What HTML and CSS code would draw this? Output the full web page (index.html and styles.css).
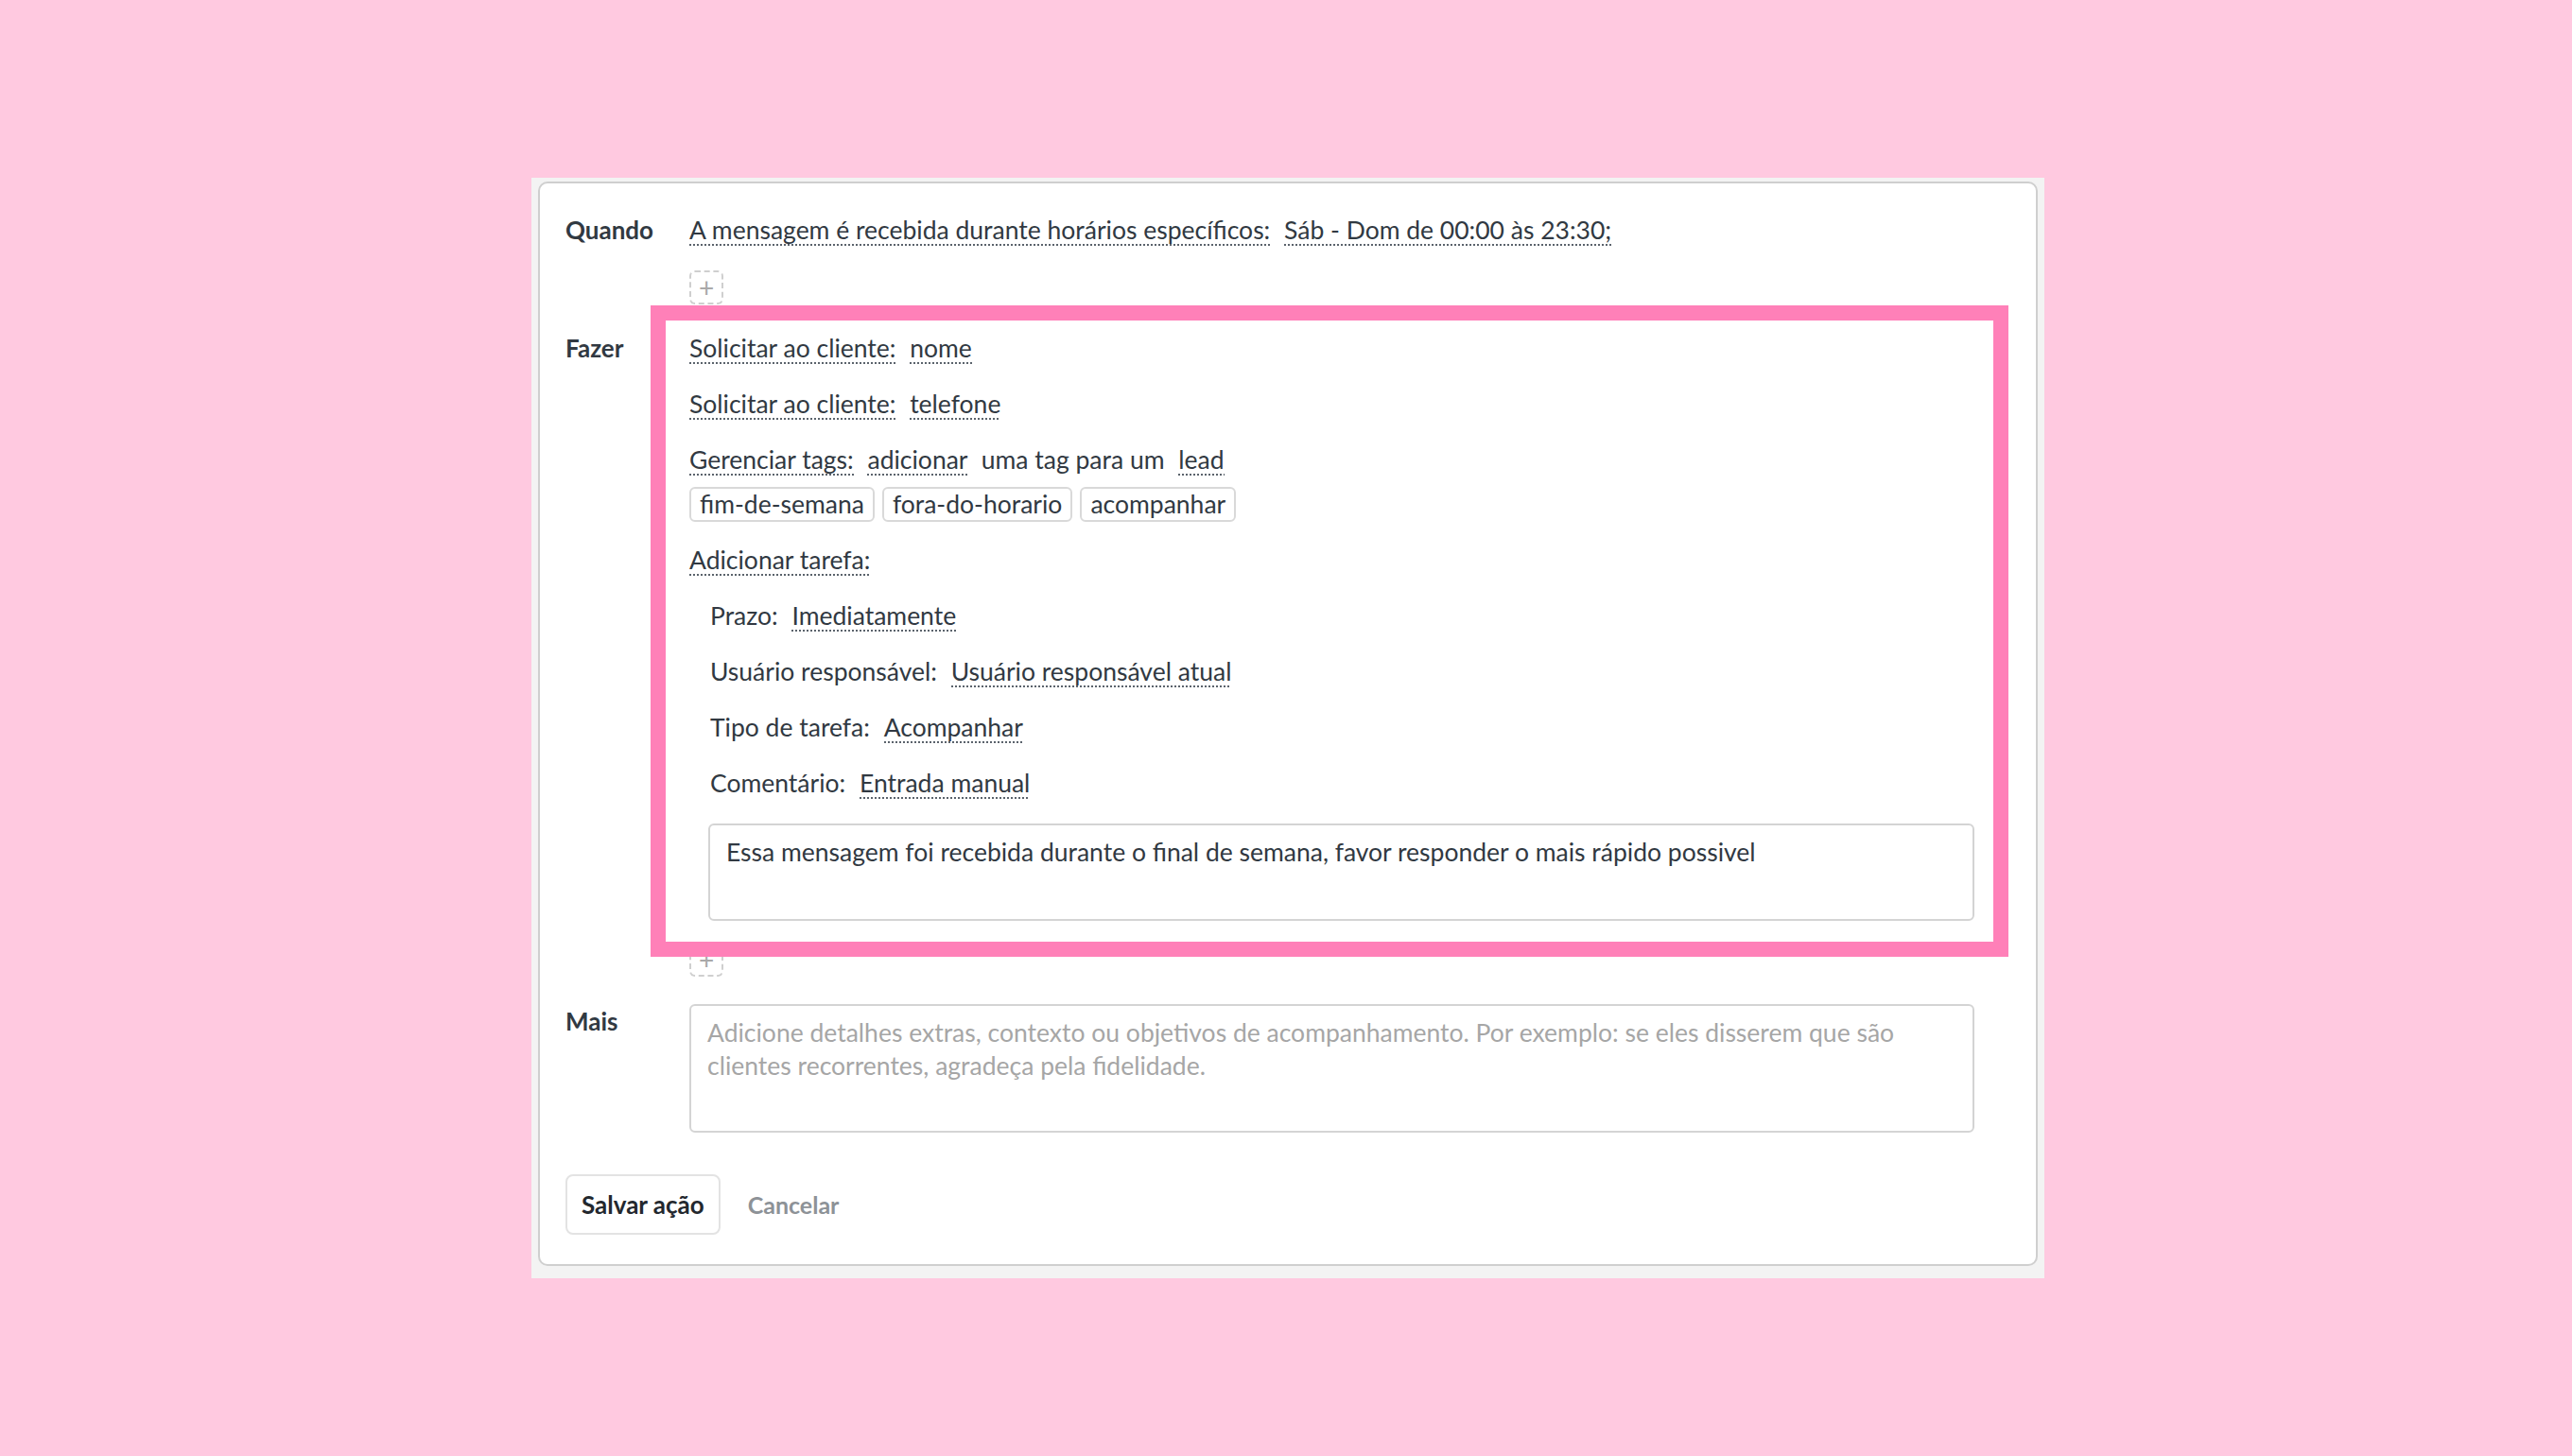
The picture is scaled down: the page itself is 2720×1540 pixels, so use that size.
FILE: index.html
```html
<!DOCTYPE html>
<html lang="pt-BR">
<head>
    <meta charset="UTF-8">
    <meta name="viewport" content="width=device-width, initial-scale=1.0">
    <title>Editar ação</title>
    <link rel="stylesheet" href="styles.css">
</head>
<body>
    <div class="frame">
        <div class="card">
            <div class="row row-when">
                <div class="label">Quando</div>
                <div class="content">
                    <div class="line">
                        <span class="link">A mensagem é recebida durante horários específicos:</span>
                        <span class="link">Sáb - Dom de 00:00 às 23:30;</span>
                    </div>
                    <button class="add">+</button>
                </div>
            </div>

            <div class="row row-do">
                <div class="label">Fazer</div>
                <div class="content">
                    <div class="actions">
                        <div class="line">
                            <span class="link">Solicitar ao cliente:</span>
                            <span class="link">nome</span>
                        </div>
                        <div class="line">
                            <span class="link">Solicitar ao cliente:</span>
                            <span class="link">telefone</span>
                        </div>
                        <div class="line line-tags">
                            <span class="link">Gerenciar tags:</span>
                            <span class="link">adicionar</span>
                            <span class="plain">uma tag para um</span>
                            <span class="link">lead</span>
                        </div>
                        <div class="tags">
                            <span class="tag">fim-de-semana</span>
                            <span class="tag">fora-do-horario</span>
                            <span class="tag">acompanhar</span>
                        </div>
                        <div class="line">
                            <span class="link">Adicionar tarefa:</span>
                        </div>
                        <div class="task">
                            <div class="line">
                                <span class="plain">Prazo:</span>
                                <span class="link">Imediatamente</span>
                            </div>
                            <div class="line">
                                <span class="plain">Usuário responsável:</span>
                                <span class="link">Usuário responsável atual</span>
                            </div>
                            <div class="line">
                                <span class="plain">Tipo de tarefa:</span>
                                <span class="link">Acompanhar</span>
                            </div>
                            <div class="line">
                                <span class="plain">Comentário:</span>
                                <span class="link">Entrada manual</span>
                            </div>
                        </div>
                        <div class="textbox note">Essa mensagem foi recebida durante o final de semana, favor responder o mais rápido possivel</div>
                    </div>
                    <button class="add">+</button>
                </div>
            </div>

            <div class="row row-more">
                <div class="label">Mais</div>
                <div class="content">
                    <div class="textbox more placeholder">Adicione detalhes extras, contexto ou objetivos de acompanhamento. Por exemplo: se eles disserem que são<br>clientes recorrentes, agradeça pela fidelidade.</div>
                </div>
            </div>

            <div class="buttons">
                <button class="btn-save">Salvar ação</button>
                <button class="btn-cancel">Cancelar</button>
            </div>
        </div>
    </div>
</body>
</html>
```

FILE: styles.css
```css
body {
    background-color: #ffc9e0;
    color: #313942;
    font-family: Lato, "Noto Sans", sans-serif;
    font-size: 26.5px;
    margin: 0;
    padding: 0;
}

.frame {
    width: 1600px;
    box-sizing: border-box;
    margin: 188px 0 0 562px;
    padding: 4px 7px 13px 7px;
    background-color: #f3f3f3;
}

.card {
    background-color: #fff;
    border: 2px solid #cfcfcf;
    border-radius: 10px;
    padding: 31px 65px 31px 27px;
}

.row {
    display: flex;
}

.row-do {
    margin-top: 28px;
}

.row-more {
    margin-top: 29px;
}

.label {
    width: 131px;
    flex: none;
    font-size: 26px;
    font-weight: bold;
    line-height: 36px;
}

.content {
    flex: 1;
    min-width: 0;
}

.line {
    line-height: 36px;
    margin-bottom: 23px;
    white-space: nowrap;
}

.row-when .line {
    margin-bottom: 25px;
}

.line > * + * {
    margin-left: 8px;
}

.link {
    padding-bottom: 1px;
    background-image: linear-gradient(to right, #5b636c 50%, transparent 50%);
    background-size: 4px 2px;
    background-repeat: repeat-x;
    background-position: left bottom;
}

.line-tags {
    margin-bottom: 11px;
}

.tags {
    display: flex;
    gap: 8px;
    margin-bottom: 22px;
}

.tag {
    border: 2px solid #d9d9d9;
    border-radius: 6px;
    padding: 0 9px;
    line-height: 33px;
}

.task {
    padding-left: 22px;
}

.task .line:last-child {
    margin-bottom: 25px;
}

.actions {
    position: relative;
    margin-bottom: 23px;
}

/* marcação rosa em volta do bloco "Fazer" */
.actions::after {
    content: "";
    position: absolute;
    left: -41px;
    top: -27px;
    right: -36px;
    bottom: -38px;
    border: 16px solid #ff80b8;
    pointer-events: none;
}

.textbox {
    border: 2px solid #d4d4d4;
    border-radius: 6px;
    padding: 11px 17px;
    line-height: 35px;
    box-sizing: border-box;
    white-space: nowrap;
}

.note {
    margin-left: 20px;
    height: 103px;
}

.more {
    height: 136px;
}

.placeholder {
    color: #a6a6a6;
}

.add {
    display: block;
    width: 36px;
    height: 36px;
    padding: 0;
    background: #fff;
    border: 2px dashed #cfcfcf;
    border-radius: 6px;
    color: #a9a9a9;
    font-family: inherit;
    font-size: 28px;
    line-height: 30px;
}

.buttons {
    display: flex;
    align-items: center;
    margin-top: 44px;
}

.btn-save {
    height: 64px;
    padding: 0 15px;
    background: #fff;
    border: 2px solid #e3e3e3;
    border-radius: 8px;
    font-family: inherit;
    font-size: 26px;
    font-weight: bold;
    color: #23282e;
}

.btn-cancel {
    margin-left: 29px;
    padding: 0;
    background: none;
    border: none;
    font-family: inherit;
    font-size: 25px;
    font-weight: bold;
    color: #8d9297;
}
```
